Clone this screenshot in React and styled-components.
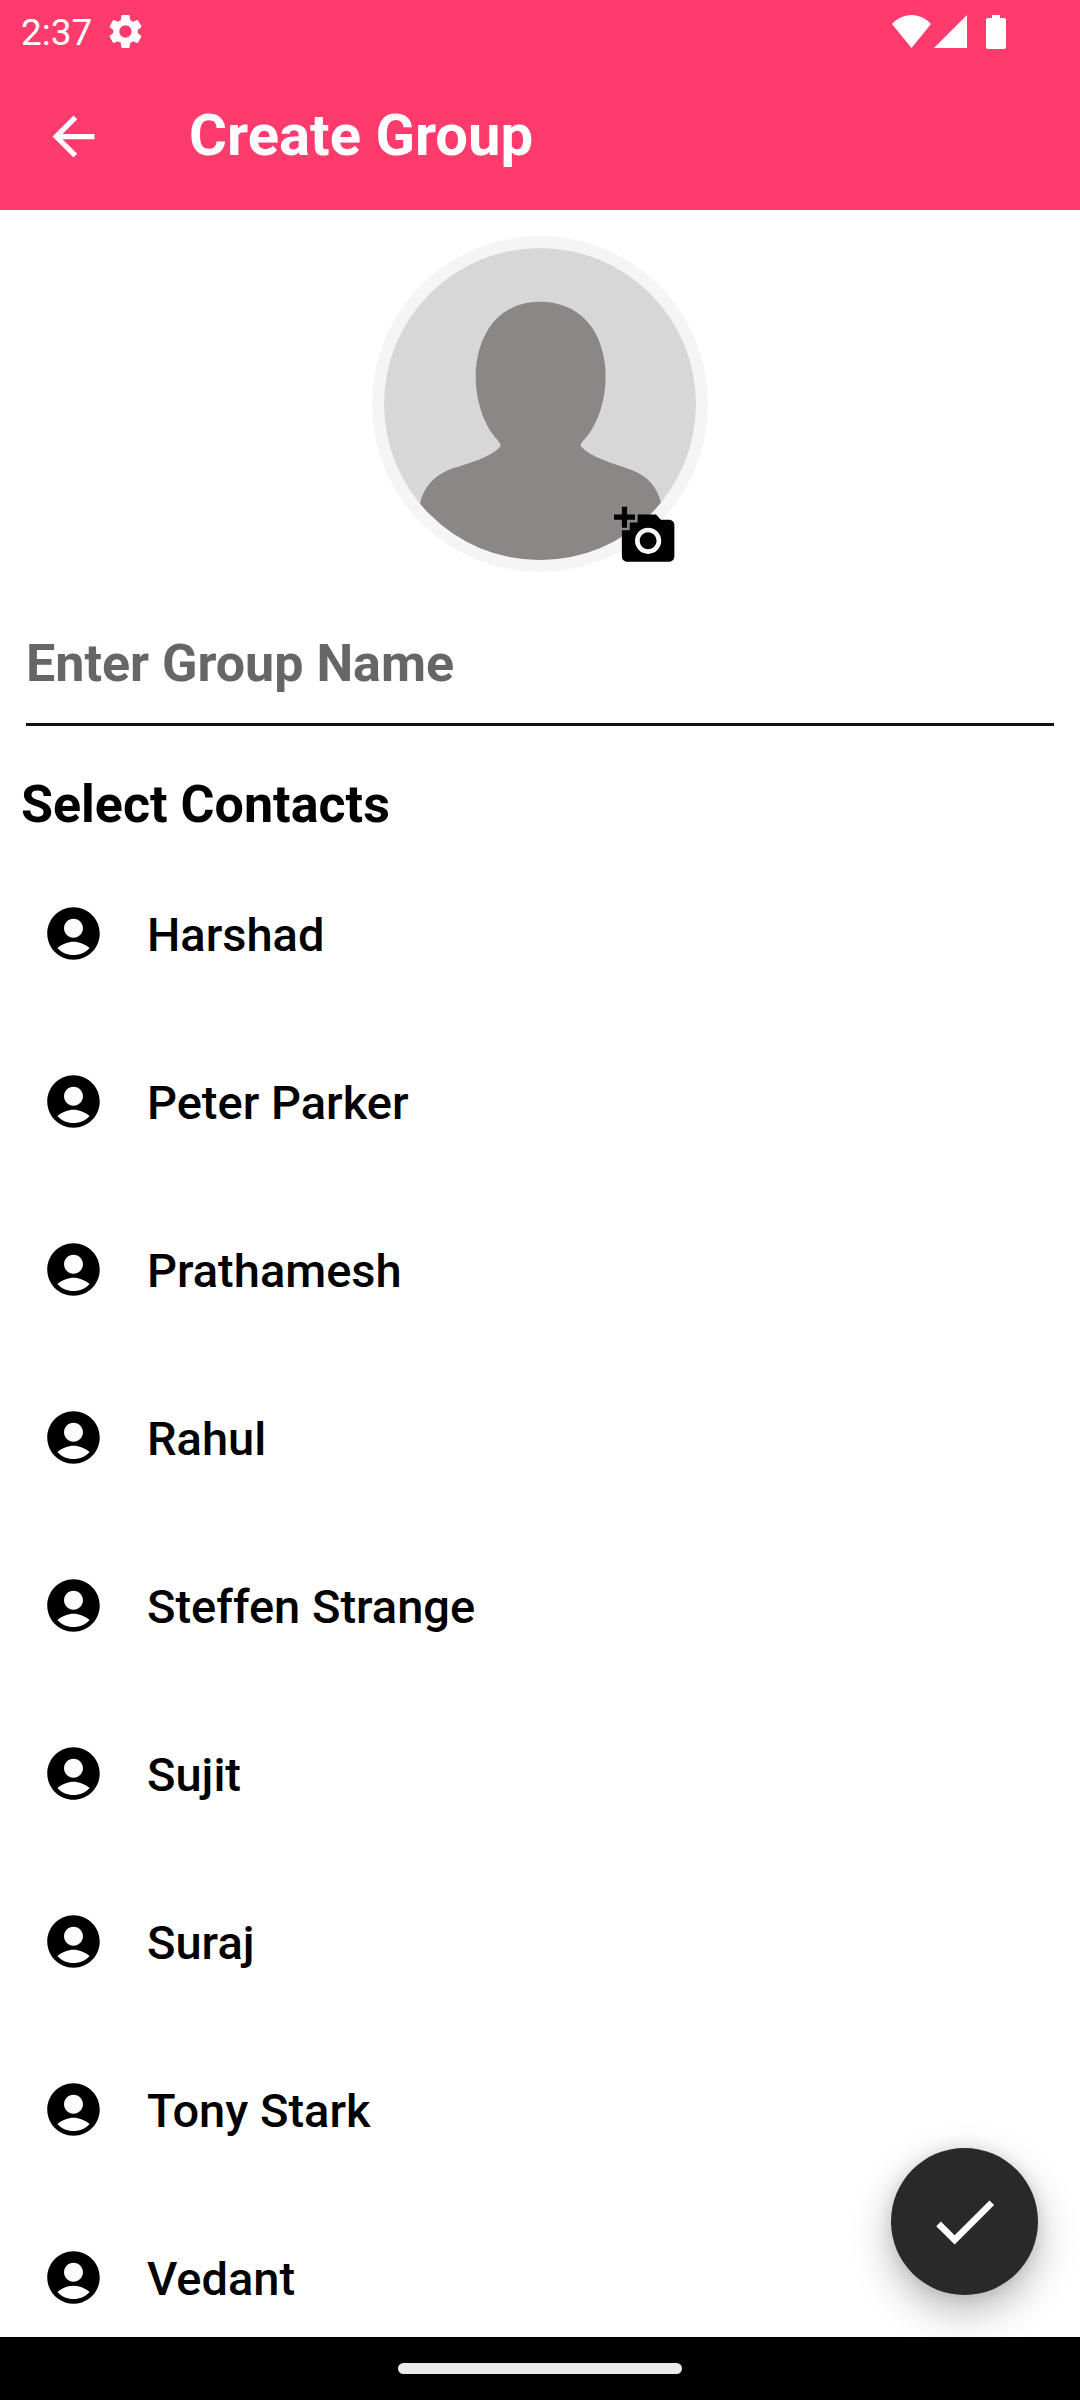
import React, { useState } from "react";
import styled, { createGlobalStyle } from "styled-components";

const GlobalStyle = createGlobalStyle`
  *, *::before, *::after { box-sizing: border-box; }
  body { margin: 0; background: #fff; }
  button, input { font-family: inherit; }
`;

const Screen = styled.div`
  display: flex;
  flex-direction: column;
  height: 100vh;
  background: #fff;
  color: #000;
  font-family: Roboto, "Noto Sans", sans-serif;
`;

const Header = styled.header`
  flex: none;
  background: #ff3b6d;
  color: #fff;
`;

const StatusBar = styled.div`
  display: flex;
  align-items: center;
  justify-content: space-between;
  height: 63px;
  padding: 0 74px 0 21px;
`;

const StatusGroup = styled.div`
  display: flex;
  align-items: center;
  gap: ${(p) => p.$gap}px;
`;

const Clock = styled.time`
  padding-top: 2px;
  font-size: 37px;
  line-height: 44px;
`;

const Toolbar = styled.div`
  display: flex;
  align-items: center;
  gap: 84px;
  height: 147px;
  padding: 0 42px;
`;

const IconButton = styled.button`
  display: flex;
  padding: 0;
  border: 0;
  background: none;
  color: inherit;
  cursor: pointer;
`;

const Title = styled.h1`
  margin: 0;
  padding-bottom: 4px;
  font-size: 58px;
  line-height: 68px;
  font-weight: 700;
`;

const Content = styled.main`
  position: relative;
  flex: 1;
  min-height: 0;
`;

const Scroller = styled.div`
  height: 100%;
  overflow-y: auto;
  scrollbar-width: none;
`;

const Avatar = styled.div`
  position: relative;
  width: 336px;
  height: 336px;
  margin: 26px auto 60px;
  border: 12px solid #f5f5f5;
  border-radius: 50%;
`;

const AddPhoto = styled(IconButton)`
  position: absolute;
  right: 19px;
  bottom: -7px;
`;

const NameInput = styled.input`
  display: block;
  width: calc(100% - 52px);
  height: 94px;
  margin: 0 26px;
  padding: 0 0 29px;
  border: 0;
  border-bottom: 3px solid #111;
  border-radius: 0;
  outline: 0;
  background: none;
  color: #000;
  font-size: 52px;
  line-height: 62px;
  font-weight: 700;

  &::placeholder {
    color: #666;
    opacity: 1;
  }
`;

const SectionTitle = styled.h2`
  margin: 48px 21px 13px;
  font-size: 52px;
  line-height: 62px;
  font-weight: 700;
`;

const ContactList = styled.ul`
  margin: 0;
  padding: 0;
  list-style: none;
`;

const ContactRow = styled.button`
  display: flex;
  align-items: center;
  gap: 42px;
  width: 100%;
  height: 168px;
  padding: 0 42px;
  border: 0;
  background: ${(p) => (p.$selected ? "#f5f5f5" : "none")};
  color: inherit;
  font-size: 47px;
  line-height: 56px;
  font-weight: 500;
  text-align: left;
  cursor: pointer;
`;

const ContactName = styled.span`
  padding-top: 3px;
`;

const Fab = styled.button`
  position: absolute;
  right: 42px;
  bottom: 42px;
  display: flex;
  align-items: center;
  justify-content: center;
  width: 147px;
  height: 147px;
  padding: 0;
  border: 0;
  border-radius: 50%;
  background: #292929;
  color: #fff;
  box-shadow: 0 16px 40px rgba(0, 0, 0, 0.28), 0 0 16px rgba(0, 0, 0, 0.1);
  cursor: pointer;
`;

const NavBar = styled.footer`
  position: relative;
  display: flex;
  flex: none;
  align-items: center;
  justify-content: center;
  height: 63px;
  background: #000;
`;

const HomeHandle = styled.div`
  width: 284px;
  height: 11px;
  border-radius: 6px;
  background: #ebebeb;
`;

const Svg = styled.svg`
  display: block;
  flex: none;
  fill: currentColor;
`;

function Icon({ d, size = 63 }) {
  return (
    <Svg width={size} height={size} viewBox="0 0 24 24" aria-hidden="true">
      <path d={d} />
    </Svg>
  );
}

const icons = {
  gear: "M19.14 12.94c.04-.3.06-.61.06-.94 0-.32-.02-.64-.07-.94l2.03-1.58c.18-.14.23-.41.12-.61l-1.92-3.32c-.12-.22-.37-.29-.59-.22l-2.39.96c-.5-.38-1.03-.7-1.62-.94l-.36-2.54c-.04-.24-.24-.41-.48-.41h-3.84c-.24 0-.43.17-.47.41l-.36 2.54c-.59.24-1.13.57-1.62.94l-2.39-.96c-.22-.08-.47 0-.59.22L2.74 8.87c-.12.21-.08.47.12.61l2.03 1.58c-.05.3-.09.63-.09.94s.02.64.07.94l-2.03 1.58c-.18.14-.23.41-.12.61l1.92 3.32c.12.22.37.29.59.22l2.39-.96c.5.38 1.03.7 1.62.94l.36 2.54c.05.24.24.41.48.41h3.84c.24 0 .44-.17.47-.41l.36-2.54c.59-.24 1.13-.56 1.62-.94l2.39.96c.22.08.47 0 .59-.22l1.92-3.32c.12-.22.07-.47-.12-.61l-2.01-1.58zM12 15.6c-1.98 0-3.6-1.62-3.6-3.6s1.62-3.6 3.6-3.6 3.6 1.62 3.6 3.6-1.62 3.6-3.6 3.6z",
  back: "M20 11H7.83l5.59-5.59L12 4l-8 8 8 8 1.41-1.41L7.83 13H20v-2z",
  addPhoto:
    "M3 4V1h2v3h3v2H5v3H3V6H0V4h3zm3 6V7h3V4h7l1.83 2H21c1.1 0 2 .9 2 2v12c0 1.1-.9 2-2 2H5c-1.1 0-2-.9-2-2V10h3zm7 9c2.76 0 5-2.24 5-5s-2.24-5-5-5-5 2.24-5 5 2.24 5 5 5zm-3.2-5c0 1.77 1.43 3.2 3.2 3.2s3.2-1.43 3.2-3.2-1.43-3.2-3.2-3.2-3.2 1.43-3.2 3.2z",
  account:
    "M12 2C6.48 2 2 6.48 2 12s4.48 10 10 10 10-4.48 10-10S17.52 2 12 2zm0 4.4c1.99 0 3.6 1.61 3.6 3.6s-1.61 3.6-3.6 3.6-3.6-1.61-3.6-3.6 1.61-3.6 3.6-3.6zm0 13.8c-2.44 0-4.62-1.04-6.15-2.7C7.38 16.05 10.1 15.1 12 15.1s4.62.95 6.15 2.4c-1.53 1.66-3.71 2.7-6.15 2.7z",
  check: "M9 16.17L4.83 12l-1.42 1.41L9 19 21 7l-1.41-1.41z",
};

function Silhouette() {
  return (
    <Svg width="100%" height="100%" viewBox="72 84 936 936" role="img" aria-label="Group photo">
      <clipPath id="avatar-clip">
        <circle cx="540" cy="552" r="468" />
      </clipPath>
      <g clipPath="url(#avatar-clip)">
        <rect x="72" y="84" width="936" height="936" fill="#d7d7d7" />
        <path
          fill="#8b8786"
          d="M540 245C612 245 665 277 697 324C722 362 737 415 737 468C737 540 715 606 682 648C672 660 662 668 662 678C690 712 755 728 815 750C868 770 892 805 903 848V1020H180V850C191 805 215 772 270 748C330 728 395 712 422 678C422 668 412 660 402 648C369 606 347 540 347 468C347 415 362 362 387 324C419 277 470 245 540 245Z"
        />
      </g>
    </Svg>
  );
}

const contacts = [
  "Harshad",
  "Peter Parker",
  "Prathamesh",
  "Rahul",
  "Steffen Strange",
  "Sujit",
  "Suraj",
  "Tony Stark",
  "Vedant",
];

export default function App() {
  const [name, setName] = useState("");
  const [selected, setSelected] = useState([]);

  const toggle = (contact) =>
    setSelected((list) =>
      list.includes(contact) ? list.filter((c) => c !== contact) : [...list, contact]
    );

  return (
    <Screen>
      <GlobalStyle />
      <Header>
        <StatusBar>
          <StatusGroup $gap={13}>
            <Clock>2:37</Clock>
            <Icon d={icons.gear} size={41} />
          </StatusGroup>
          <StatusGroup $gap={3}>
            <Svg width="39" height="33" viewBox="0 0 39 33" aria-hidden="true">
              <path d="M0 9C5 3.500 12 0 19.500 0S34 3.500 39 9L19.500 33z" />
            </Svg>
            <Svg width="49" height="33" viewBox="0 0 49 33" aria-hidden="true">
              <path d="M33 0V33H0z" />
            </Svg>
            <Svg width="20" height="34" viewBox="0 0 20 34" aria-hidden="true">
              <path d="M6 0h8v3h4a2 2 0 0 1 2 2v27a2 2 0 0 1-2 2H2a2 2 0 0 1-2-2V5a2 2 0 0 1 2-2h4z" />
            </Svg>
          </StatusGroup>
        </StatusBar>
        <Toolbar>
          <IconButton type="button" aria-label="Back">
            <Icon d={icons.back} />
          </IconButton>
          <Title>Create Group</Title>
        </Toolbar>
      </Header>

      <Content>
        <Scroller>
          <Avatar>
            <Silhouette />
            <AddPhoto type="button" aria-label="Add group photo">
              <Icon d={icons.addPhoto} />
            </AddPhoto>
          </Avatar>
          <NameInput
            type="text"
            aria-label="Group name"
            placeholder="Enter Group Name"
            value={name}
            onChange={(e) => setName(e.target.value)}
          />
          <SectionTitle>Select Contacts</SectionTitle>
          <ContactList>
            {contacts.map((contact) => (
              <li key={contact}>
                <ContactRow
                  type="button"
                  $selected={selected.includes(contact)}
                  aria-pressed={selected.includes(contact)}
                  onClick={() => toggle(contact)}
                >
                  <Icon d={icons.account} />
                  <ContactName>{contact}</ContactName>
                </ContactRow>
              </li>
            ))}
          </ContactList>
        </Scroller>
        <Fab type="button" aria-label="Create group">
          <Icon d={icons.check} size={79} />
        </Fab>
      </Content>

      <NavBar>
        <HomeHandle />
      </NavBar>
    </Screen>
  );
}
